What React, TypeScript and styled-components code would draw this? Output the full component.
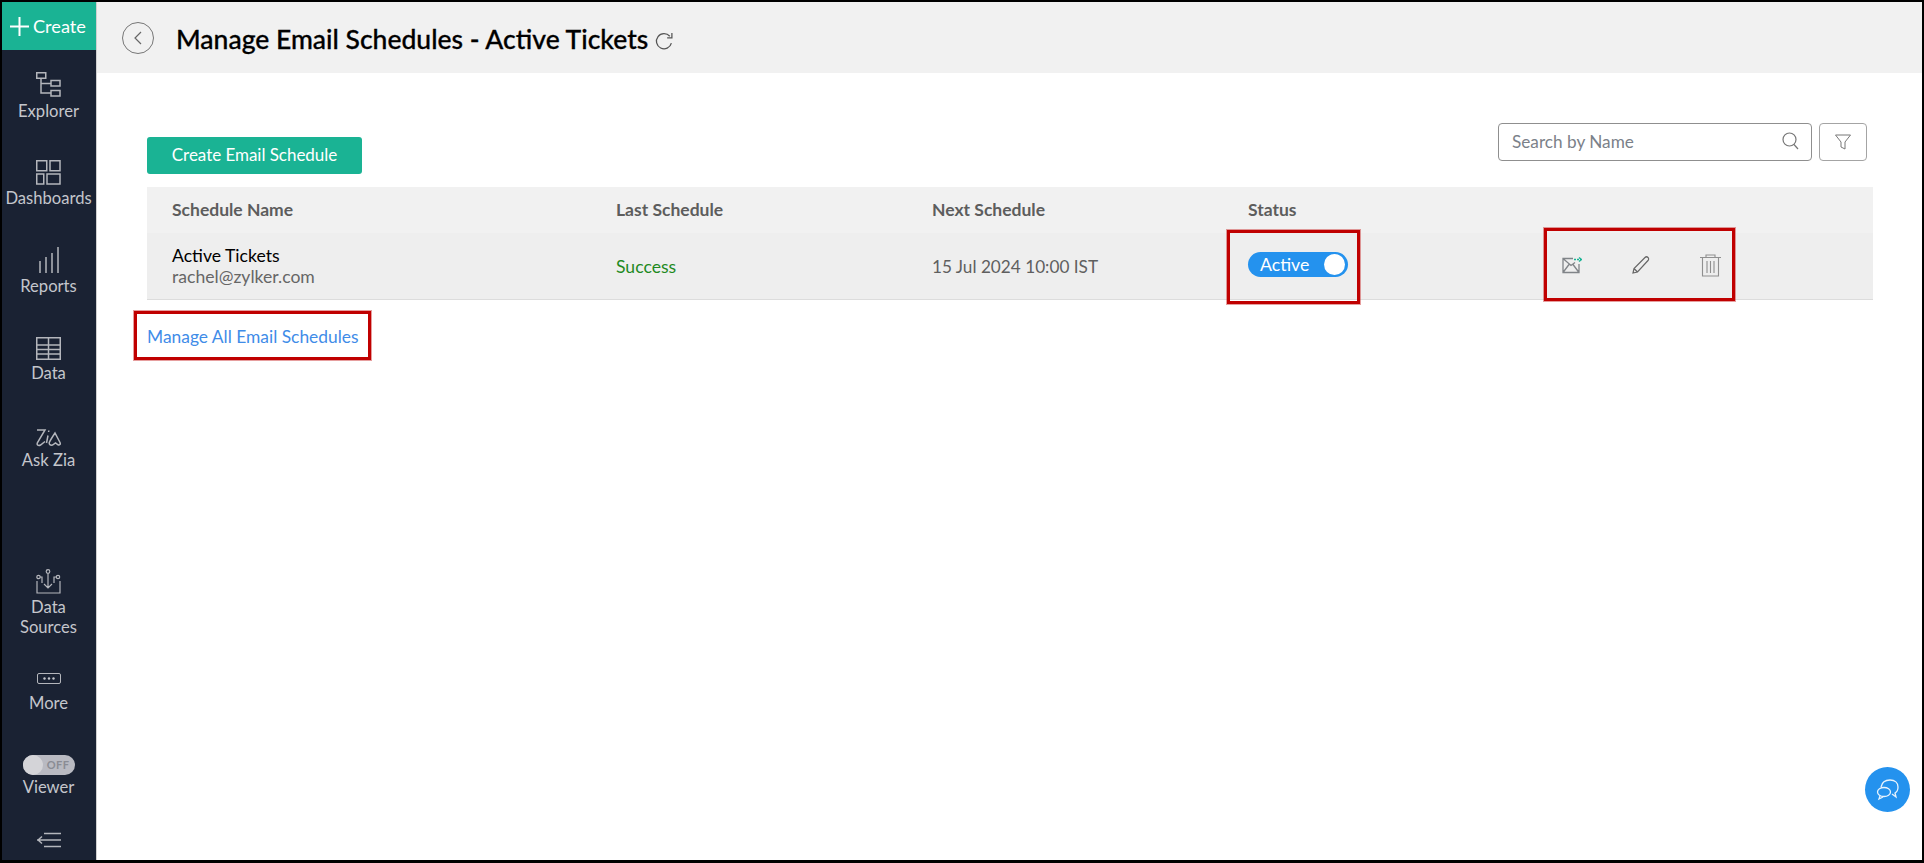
import React from "react";
import styled, { createGlobalStyle } from "styled-components";

const Global = createGlobalStyle`
  html, body { margin: 0; padding: 0; background: #fff; }
  * { box-sizing: border-box; }
  body { font-family: Lato, "Open Sans", sans-serif; }
`;
const Frame = styled.div`
  position: relative; width: 1924px; height: 863px; border: 2px solid #000; border-bottom-width: 3px;
  display: flex; overflow: hidden; background: #fff;
`;
const Sidebar = styled.nav`
  width: 95px; flex: none; background: #1a2233; border-right: 1px solid #d0d0d0; display: flex; flex-direction: column;
`;
const CreateBtn = styled.div`
  height: 48px; background: #1ab394; color: #fff; font-size: 18.2px; display: flex; align-items: center; padding-left: 8px; gap: 4px;
`;
const NavList = styled.div`
  display: flex; flex-direction: column; padding-top: 12px;
`;
const NavItem = styled.div`
  height: 87.3px; display: flex; flex-direction: column; align-items: center; color: #c4c6cc; font-size: 16.6px; line-height: 20px; padding-top: 2px; margin-left: -1px;
  svg { display: block; margin-bottom: 3px; }
`;
const IconSlot = styled.div`
  height: 38px; display: flex; align-items: flex-end; justify-content: center; margin-top: -1px;
`;
const Bottom = styled.div`
  margin-top: auto; display: flex; flex-direction: column; align-items: center; color: #c4c6cc; font-size: 16.6px; line-height: 20px; text-align: center; padding-bottom: 12px; margin-left: -1px;
`;
const BottomItem = styled.div<{ $mb: number }>`
  display: flex; flex-direction: column; align-items: center; margin-bottom: ${(p) => p.$mb}px;
`;
const ViewerToggle = styled.div`
  width: 52px; height: 20px; border-radius: 10px; background: #b9bac2; display: flex; align-items: center; justify-content: flex-end;
  padding-right: 5px; color: #8a8c94; font-size: 11px; font-weight: 700; position: relative; letter-spacing: .5px;
  &::before { content: ""; position: absolute; left: 0; top: 0; width: 20px; height: 20px; border-radius: 50%; background: #d4d4d8; }
`;
const ViewerLabel = styled.div`
  margin-top: 2px;
`;
const Main = styled.main`
  flex: 1; display: flex; flex-direction: column; min-width: 0;
`;
const Header = styled.header`
  height: 71px; background: #f1f1f1; display: flex; align-items: center; padding-left: 25px;
`;
const BackBtn = styled.div`
  width: 32px; height: 32px; border: 1px solid #777; border-radius: 50%; display: flex; align-items: center; justify-content: center; margin-right: 22px;
`;
const Title = styled.h1`
  margin: 2px 6px 0 0; font-size: 26.5px; font-weight: 500; color: #000; line-height: 32px; -webkit-text-stroke: .3px #000;
`;
const RefreshIcon = styled.svg`
  margin-top: 6px;
`;
const Content = styled.div`
  padding: 50px 49px 0 50px; display: flex; flex-direction: column;
`;
const Toolbar = styled.div`
  display: flex; justify-content: space-between; align-items: flex-start; height: 64px;
`;
const PrimaryBtn = styled.button`
  margin-top: 14px; width: 215px; height: 37px; padding: 0 0 2px; background: #1ab394; color: #fff; border: none; border-radius: 3px; font: 400 17px Lato, sans-serif; letter-spacing: -.03px;
`;
const ToolRight = styled.div`
  display: flex; gap: 7px; padding-right: 6px;
`;
const Search = styled.div`
  width: 314px; height: 38px; border: 1px solid #8f8f8f; border-radius: 4px; padding: 0 12px 2px 13px; display: flex; align-items: center; justify-content: space-between;
  color: #7b8189; font-size: 17.2px; background: #fff;
`;
const FilterBtn = styled.div`
  width: 48px; height: 38px; border: 1px solid #a4a4a4; border-radius: 4px; display: flex; align-items: center; justify-content: center;
`;
const Grid = styled.div`
  display: grid; grid-template-columns: 444px 316px 316px 316px 1fr; padding-left: 25px;
`;
const TableHead = styled(Grid)`
  height: 46px; background: #f1f1f1; align-items: center; color: #5d5d5d; font-size: 17.5px; font-weight: 700; padding-bottom: 2px;
`;
const TableRow = styled(Grid)`
  height: 67px; background: #eeeeee; border-bottom: 1px solid #dcdcdc; align-items: center; font-size: 17.2px; color: #5f5f5f;
`;
const NameCell = styled.div`
  display: flex; flex-direction: column; line-height: 21px; color: #666; font-size: 17.6px;
  strong { font-weight: 400; color: #000; }
`;
const Success = styled.div`
  color: #1f8a1f; font-size: 17.6px;
`;
const Toggle = styled.div`
  width: 100px; height: 25px; margin-top: -4px; background: #2492ee; border-radius: 13px; color: #fff; font-size: 17.7px; padding-left: 12px; display: flex; align-items: center; position: relative;
  &::after { content: ""; position: absolute; right: 3px; top: 2px; width: 21px; height: 21px; background: #fff; border-radius: 50%; }
`;
const Actions = styled.div`
  display: flex; align-items: center; gap: 50px; margin: -2px 0 0 -2px;
`;
const ManageLink = styled.a`
  color: #3f8ce8; font-size: 17.4px; line-height: 20px; margin-top: 27px;
`;
const Callout = styled.div<{ $x: number; $y: number; $w: number; $h: number }>`
  position: absolute; left: ${(p) => p.$x}px; top: ${(p) => p.$y}px; width: ${(p) => p.$w}px; height: ${(p) => p.$h}px;
  border: 3px solid #c00000; box-shadow: 0 0 0 1px rgba(200, 40, 40, .45); pointer-events: none;
`;
const ChatFab = styled.div`
  position: absolute; left: 1863px; top: 765px; width: 45px; height: 45px; border-radius: 50%; background: #2492ee; display: flex; align-items: center; justify-content: center;
`;

const s = { fill: "none", stroke: "#b4b6bc", strokeWidth: 1.5 };

export default function App() {
  return (
    <Frame>
      <Global />
      <Sidebar>
        <CreateBtn>
          <svg width="19" height="19" viewBox="0 0 19 19" stroke="#fff" strokeWidth="2" fill="none"><path d="M9.5 0v19M0 9.5h19" /></svg>
          Create
        </CreateBtn>
        <NavList>
          <NavItem>
            <IconSlot>
              <svg width="25" height="26" viewBox="0 0 25 26" {...s}><rect x=".75" y=".75" width="9" height="5.5" /><rect x="15" y="8.5" width="9" height="5.5" /><rect x="15" y="18.5" width="9" height="5.5" /><path d="M5 6.5V21h10M5 11.5h10" /></svg>
            </IconSlot>
            Explorer
          </NavItem>
          <NavItem>
            <IconSlot>
              <svg width="25" height="25" viewBox="0 0 25 25" {...s}><rect x=".75" y=".75" width="10" height="10" /><rect x="14" y=".75" width="10" height="10" /><rect x=".75" y="14" width="7" height="10" /><rect x="11" y="14" width="13" height="10" /></svg>
            </IconSlot>
            Dashboards
          </NavItem>
          <NavItem>
            <IconSlot>
              <svg width="20" height="26" viewBox="0 0 20 26" {...s}><path d="M1 14v12M7 10v16M13 6v20M19 0v26" /></svg>
            </IconSlot>
            Reports
          </NavItem>
          <NavItem>
            <IconSlot>
              <svg width="25" height="23" viewBox="0 0 25 23" {...s}><rect x=".75" y=".75" width="23.5" height="21.5" /><path d="M.75 8h23.5M.75 12.5h23.5M.75 17h23.5M12.5 .75v21.5" /></svg>
            </IconSlot>
            Data
          </NavItem>
          <NavItem>
            <IconSlot>
              <svg width="25" height="19" viewBox="0 0 25 19" {...s}><path d="M1 2h8L1.500 14.500c-1.200 2.500 1 3.500 3 2.500l4.500-3.500M12 7.500 10.500 15M12.800 2.500l-.2 1.500M19 5c-2 3-4 6-5.500 9-1 2.500 1 3.500 3 3l3-2 2.500 1.800c1.500.7 2.800-.5 2-2.300z" /></svg>
            </IconSlot>
            Ask Zia
          </NavItem>
        </NavList>
        <Bottom>
          <BottomItem $mb={36}>
            <svg width="25" height="25" viewBox="0 0 25 25" {...s} strokeWidth="1.2" style={{ marginBottom: 3 }}><circle cx="12" cy="2.500" r="1.800" /><circle cx="2.500" cy="8" r="1.700" /><circle cx="22" cy="8" r="1.700" /><path d="M12 4.500v14M8 15l4 4 4-4M4 8h2v6M20 8h-2v6M1 12v12h23V12" /></svg>
            <div>Data<br />Sources</div>
          </BottomItem>
          <BottomItem $mb={42}>
            <svg width="24" height="12" viewBox="0 0 24 12" style={{ marginBottom: 8 }}><rect x=".5" y=".5" width="23" height="10" rx="1.500" fill="none" stroke="#b4b6bc" /><circle cx="7.500" cy="5.500" r="1.200" fill="#c4c6cc" /><circle cx="12" cy="5.500" r="1.200" fill="#c4c6cc" /><circle cx="16.500" cy="5.500" r="1.200" fill="#c4c6cc" /></svg>
            <div>More</div>
          </BottomItem>
          <BottomItem $mb={35}>
            <ViewerToggle>OFF</ViewerToggle>
            <ViewerLabel>Viewer</ViewerLabel>
          </BottomItem>
          <svg width="24" height="16" viewBox="0 0 24 16" {...s}><path d="M7 1.500h17M0 8h24M7 14.500h17M5 4.500 1 8l4 3.500" /></svg>
        </Bottom>
      </Sidebar>
      <Main>
        <Header>
          <BackBtn>
            <svg width="10" height="14" viewBox="0 0 10 14" fill="none" stroke="#666" strokeWidth="1.2"><path d="M8 1 2 7l6 6" /></svg>
          </BackBtn>
          <Title>Manage Email Schedules - Active Tickets</Title>
          <RefreshIcon width="20" height="20" viewBox="0 0 19 19" fill="none" stroke="#555" strokeWidth="1.2"><path d="M16.500 11.500A7.200 7.200 0 1 1 15 5" /><path d="M17 2v4.500h-4.500" /></RefreshIcon>
        </Header>
        <Content>
          <Toolbar>
            <PrimaryBtn>Create Email Schedule</PrimaryBtn>
            <ToolRight>
              <Search>
                Search by Name
                <svg width="17" height="18" viewBox="0 0 17 18" fill="none" stroke="#777" strokeWidth="1.2"><circle cx="7.500" cy="7.500" r="6.500" /><path d="m12 12.500 4 4.500" /></svg>
              </Search>
              <FilterBtn>
                <svg width="16" height="16" viewBox="0 0 16 16" fill="none" stroke="#777"><path d="M.5 1h15L10 8v7l-4-2V8z" /></svg>
              </FilterBtn>
            </ToolRight>
          </Toolbar>
          <TableHead>
            <div>Schedule Name</div>
            <div>Last Schedule</div>
            <div>Next Schedule</div>
            <div>Status</div>
            <div />
          </TableHead>
          <TableRow>
            <NameCell><strong>Active Tickets</strong>rachel@zylker.com</NameCell>
            <Success>Success</Success>
            <div>15 Jul 2024 10:00 IST</div>
            <div><Toggle>Active</Toggle></div>
            <Actions>
              <svg width="20" height="18" viewBox="0 0 20 18" fill="none" stroke="#808488" strokeWidth="1.300"><path d="M11 2.500H1v14h16V8M1 2.500l8 7 4-3M1 16.500l6-8M17 16.500l-6-8" /><path d="M12 3.500h7" stroke="#1ab394" strokeDasharray="2 1" strokeWidth="1.500" /><path d="M17 1.500 19.500 3.500 17 5.500" stroke="#1ab394" strokeWidth="1.500" /></svg>
              <svg width="18" height="18" viewBox="0 0 18 18" fill="none" stroke="#666" strokeWidth="1.200"><path d="M1 17l1-4.500L13 1.500a1.800 1.800 0 0 1 3 3L5.500 16z M2 12.500 5.500 16" /></svg>
              <svg width="21" height="23" viewBox="0 0 21 23" fill="none" stroke="#8f8f8f" strokeWidth="1.100"><path d="M0 3.500h21M6 3V1h9v2M2.500 3.500V22h16V3.500M7 7V19M10.500 7V19M14 7V19" /></svg>
            </Actions>
          </TableRow>
          <ManageLink>Manage All Email Schedules</ManageLink>
        </Content>
      </Main>
      <Callout $x={1225} $y={228} $w={133} $h={74} />
      <Callout $x={1542} $y={226} $w={191} $h={73} />
      <Callout $x={132} $y={309} $w={237} $h={49} />
      <ChatFab>
        <svg width="24" height="22" viewBox="0 0 24 22" fill="none" stroke="#e8f3fd" strokeWidth="1.300"><path d="M5 8c1-5 5-7 9-7 5 0 8 3 8 7 0 3-1 5-3 6l1 4-4-3" /><ellipse cx="8" cy="13" rx="6.500" ry="4.500" /><path d="M4 17l-1 3 4-2" /></svg>
      </ChatFab>
    </Frame>
  );
}
